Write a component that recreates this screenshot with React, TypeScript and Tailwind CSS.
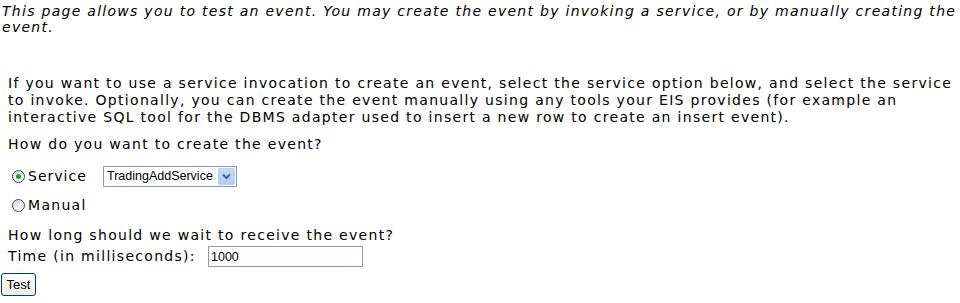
import { useState } from "react";

const FONT = "font-['DejaVu_Sans',Verdana,sans-serif]";

function Radio({ checked, onClick }: { checked: boolean; onClick: () => void }) {
  return (
    <span
      onClick={onClick}
      className="w-[13px] h-[13px] rounded-full border border-[#1c5180] bg-gradient-to-br from-[#dcdcd7] to-white flex items-center justify-center shrink-0 cursor-pointer"
    >
      {checked && <span className="w-[5px] h-[5px] rounded-full bg-[#21a121]" />}
    </span>
  );
}

export default function App() {
  const [mode, setMode] = useState<"service" | "manual">("service");
  const [time, setTime] = useState("1000");

  return (
    <div className={`w-[960px] h-[303px] bg-white text-black ${FONT} text-[14px] tracking-[1.3px] overflow-hidden`}>
      <p className="italic leading-[16px] pl-[2px] pt-[3px] tracking-[1.28px]">
        This page allows you to test an event. You may create the event by invoking a service, or by manually creating the
        event.
      </p>

      <div className="pl-[8px] pt-[40px]">
        <p className="leading-[17px] pr-[2px]">
          If you want to use a service invocation to create an event, select the service option below, and select the service
          to invoke. Optionally, you can create the event manually using any tools your EIS provides (for example an
          interactive SQL tool for the DBMS adapter used to insert a new row to create an insert event).
        </p>

        <p className="leading-[17px] mt-[10px]">How do you want to create the event?</p>

        <div className="flex items-center mt-[13px] h-[21px] pl-[4px]">
          <Radio checked={mode === "service"} onClick={() => setMode("service")} />
          <span className="ml-[3px] w-[75px] tracking-[1px]">Service</span>
          <div className="flex items-center w-[134px] h-[21px] border border-[#7f9db9] bg-white pl-[3px] pr-[1px] tracking-normal">
            <span className="flex-1 font-['Liberation_Sans',Arial,sans-serif] text-[12.5px]">TradingAddService</span>
            <span className="w-[17px] h-[17px] bg-gradient-to-b from-[#c7d9fc] to-[#aecbf9] border border-[#b9cdf5] rounded-[2px] flex items-center justify-center">
              <svg width="9" height="7" viewBox="0 0 9 7">
                <path d="M1 1.5 L4.5 5 L8 1.5" stroke="#4d6185" strokeWidth="2" fill="none" />
              </svg>
            </span>
          </div>
        </div>

        <div className="flex items-center mt-[8px] h-[21px] pl-[4px]">
          <Radio checked={mode === "manual"} onClick={() => setMode("manual")} />
          <span className="ml-[3px]">Manual</span>
        </div>

        <p className="leading-[17px] mt-[11px]">How long should we wait to receive the event?</p>

        <div className="flex items-center h-[21px] mt-[2px]">
          <span className="w-[200px] whitespace-nowrap">Time (in milliseconds):</span>
          <input
            value={time}
            onChange={(e) => setTime(e.target.value)}
            className="w-[155px] h-[21px] border border-[#7f9db9] px-[2px] font-['Liberation_Sans',Arial,sans-serif] text-[12.5px] tracking-normal outline-none"
          />
        </div>
      </div>

      <button className="ml-[1px] mt-[6px] h-[23px] w-[35px] border border-[#003c74] rounded-[3px] bg-gradient-to-b from-white to-[#ecebe6] font-['Liberation_Sans',Arial,sans-serif] text-[13px] tracking-normal leading-none">
        Test
      </button>
    </div>
  );
}
